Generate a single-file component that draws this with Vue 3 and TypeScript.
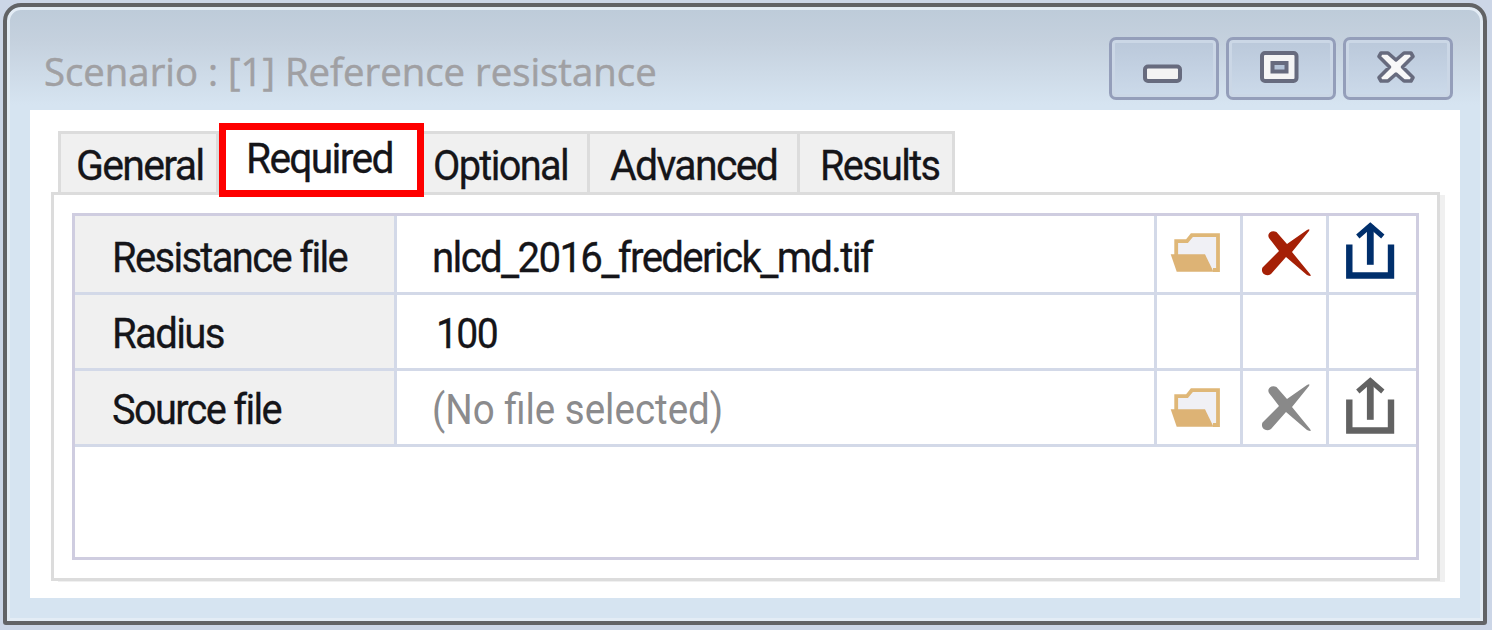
<script setup lang="ts">
interface Tab { label: string; width: number; fit: number; pad: number; active?: boolean }
interface Row { label: string; labelFit: number; value: string; valueFit: number; icons: boolean; enabled: boolean }

const title = 'Scenario : [1] Reference resistance'

const tabs: Tab[] = [
  { label: 'General', width: 161, fit: 128, pad: 15 },
  { label: 'Required', width: 205, fit: 147, pad: 20, active: true },
  { label: 'Optional', width: 166, fit: 135, pad: 9 },
  { label: 'Advanced', width: 210, fit: 167, pad: 20 },
  { label: 'Results', width: 155, fit: 119, pad: 20 },
]

const rows: Row[] = [
  { label: 'Resistance file', labelFit: 235, value: 'nlcd_2016_frederick_md.tif', valueFit: 440, icons: true, enabled: true },
  { label: 'Radius', labelFit: 112, value: '100', valueFit: 61, icons: false, enabled: true },
  { label: 'Source file', labelFit: 169, value: '(No file selected)', valueFit: 291, icons: true, enabled: false },
]

// Separates underscores from the rest so they can hang below the baseline.
const parts = (text: string): string[] => text.split(/(_)/)

// Condenses a label horizontally to the given advance width.
const vFit = {
  mounted(el: HTMLElement, binding: { value: number }) {
    el.style.transform = `scaleX(${binding.value / el.offsetWidth})`
  },
}
</script>

<template>
  <div class="desktop">
    <div class="window">
      <header class="titlebar">
        <h1 class="title"><span v-fit="613" class="fit">{{ title }}</span></h1>
        <div class="controls">
          <button class="ctl" aria-label="Minimize">
            <svg width="104" height="57" viewBox="1112 40 104 57">
              <rect x="1145" y="66.500" width="35" height="14.500" rx="3" fill="#f3f3f3" stroke="#676b7e" stroke-width="4" />
            </svg>
          </button>
          <button class="ctl" aria-label="Maximize">
            <svg width="104" height="57" viewBox="1229 40 104 57">
              <rect x="1262" y="53" width="34.500" height="28" rx="3" fill="#f5f5f5" stroke="#676b7e" stroke-width="4" />
              <rect x="1272.500" y="63" width="14" height="8.500" fill="#b5c4d8" stroke="#676b7e" stroke-width="4" />
            </svg>
          </button>
          <button class="ctl" aria-label="Close">
            <svg width="104" height="57" viewBox="1346 40 104 57" stroke-linejoin="round">
              <path d="M1381 53H1388L1396 60L1404 53H1411L1413 56.500L1402.500 67L1413 77.500L1411 81H1404L1396 74L1388 81H1381L1379 77.500L1389.500 67L1379 56.500Z" fill="#f8f8f8" stroke="#676b7e" stroke-width="3.600" />
            </svg>
          </button>
        </div>
      </header>

      <main class="client">
        <nav class="tabs">
          <div v-for="t in tabs" :key="t.label" class="tab" :class="{ active: t.active }" :style="{ width: t.width + 'px', paddingLeft: t.pad + 'px' }">
            <span v-fit="t.fit" class="fit tight">{{ t.label }}</span>
          </div>
        </nav>
        <section class="page">
          <div class="grid">
            <div v-for="r in rows" :key="r.label" class="row">
              <div class="cell name"><span v-fit="r.labelFit" class="fit tight">{{ r.label }}</span></div>
              <div class="cell value" :class="{ muted: !r.enabled, num: !r.icons }">
                <span v-fit="r.valueFit" class="fit" :class="{ tight: r.enabled }"><span v-for="(p, i) in parts(r.value)" :key="i" :class="{ underscore: p === '_' }">{{ p }}</span></span>
              </div>
              <div class="cell icon">
                <svg v-if="r.icons" width="83" height="76" viewBox="0 0 83 76">
                  <path d="M19.200 40V25.200H30L34.800 19.200H61V54H56" fill="#f0f0f5" stroke="#dfb777" stroke-width="3.800" />
                  <path d="M13.700 38.300H48L56.500 55.800H19.700Z" fill="#ddb375" />
                </svg>
              </div>
              <div class="cell icon">
                <svg v-if="r.icons" width="83" height="76" viewBox="0 0 83 76" :class="r.enabled ? 'del-on' : 'del-off'">
                  <path d="M26 22C23.500 17.500 28.500 13.500 33.500 16L44 28L64 14Q67.500 12 66 15L49 36L67 58Q69.500 61.500 64 59L43 41L28 58C23 61.500 17 57 19.500 51.500L36 35Z" />
                </svg>
              </div>
              <div class="cell icon last">
                <svg v-if="r.icons" width="86" height="76" viewBox="0 -0.500 86 76" fill="none" :class="r.enabled ? 'out-on' : 'out-off'">
                  <path d="M20.300 28V59H62V28" stroke-width="6.400" />
                  <path d="M41.300 9V48.300" stroke-width="6.800" />
                  <path d="M28.800 20L41.300 9L53.800 20" stroke-width="5" />
                </svg>
              </div>
            </div>
          </div>
        </section>
      </main>
    </div>
  </div>
</template>

<style>
html, body { margin: 0; overflow: hidden; }
</style>

<style scoped>
* { box-sizing: border-box; }
.desktop {
  width: 1492px;
  height: 630px;
  padding: 3px 5px 5px 3px;
  background: #ccd6e7;
  font-family: Roboto, "Liberation Sans", sans-serif;
}
.window {
  width: 1484px;
  height: 622px;
  border: 4px solid #626366;
  border-radius: 18px 18px 3px 3px;
  background: linear-gradient(#bdcbd9 0, #c5d1de 35px, #d6e4f1 98px, #d6e4f1 100%);
  box-shadow: inset 0 0 0 3px #e3ecf5;
}
.titlebar {
  display: flex;
  justify-content: space-between;
  height: 103px;
  padding: 30px 30px 0 37px;
}
.title {
  margin: 0;
  padding-top: 7px;
  font: 400 39px/54px "Open Sans", "Noto Sans", sans-serif;
  color: #a0a0a3;
  -webkit-text-stroke: 0.5px #a0a0a3;
}
.fit {
  display: inline-block;
  white-space: nowrap;
  transform-origin: left center;
}
.tight {
  letter-spacing: -1.8px;
  -webkit-text-stroke: 0.3px #151519;
}
.underscore {
  line-height: 0;
  vertical-align: -3px;
}
.controls { display: flex; gap: 7px; }
.ctl {
  width: 110px;
  height: 63px;
  padding: 0;
  border: 3px solid #949eba;
  border-radius: 7px;
  background: linear-gradient(#bac8da, #ccdaea);
  box-shadow: inset 0 0 0 3px #cbd7e6;
}
.ctl svg { display: block; }
.client {
  width: 1430px;
  height: 488px;
  margin-left: 23px;
  padding: 13px 20px 0 21px;
  background: #fff;
}
.tabs {
  position: relative;
  z-index: 1;
  display: flex;
  align-items: flex-end;
  height: 74px;
  padding-left: 7px;
}
.tab {
  height: 64px;
  margin-bottom: 2px;
  border-top: 3px solid #dcdcdc;
  border-right: 3px solid #dcdcdc;
  border-bottom: 3px solid #dcdcdc;
  background: #f0f0f0;
  font-size: 43px;
  line-height: 62px;
  color: #151519;
}
.tab:first-child { border-left: 3px solid #dcdcdc; }
.tab.active {
  height: 74px;
  margin-bottom: 0;
  border: 7px solid #fe0000;
  background: #fff;
  line-height: 56px;
}
.page {
  width: 1389px;
  height: 389px;
  margin-top: -5px;
  padding: 18px;
  border: 3px solid #dcdcdc;
  box-shadow: 6px 2px 0 -1px #f0f0f0;
}
.grid {
  width: 1347px;
  height: 347px;
  border: 3px solid #cfcde0;
}
.row {
  display: grid;
  grid-template-columns: 322px 760px 86px 86px 87px;
  height: 76px;
  border-bottom: 3px solid #d3d9e8;
}
.row:first-child { height: 79px; }
.cell {
  border-right: 3px solid #d3d9e8;
  overflow: hidden;
  font-size: 43px;
  line-height: 83px;
  color: #151519;
}
.row:not(:first-child) .cell { line-height: 76px; }
.cell.name { padding-left: 37px; background: #f0f0f0; }
.cell.value { padding-left: 35px; }
.cell.value.num { padding-left: 39px; }
.cell.muted { color: #8b8b8d; }
.cell.last { border-right: 0; }
.cell.icon svg { display: block; }
.del-on { fill: #a52006; }
.del-off { fill: #898989; }
.out-on { stroke: #002f6c; }
.out-off { stroke: #626262; }
</style>
